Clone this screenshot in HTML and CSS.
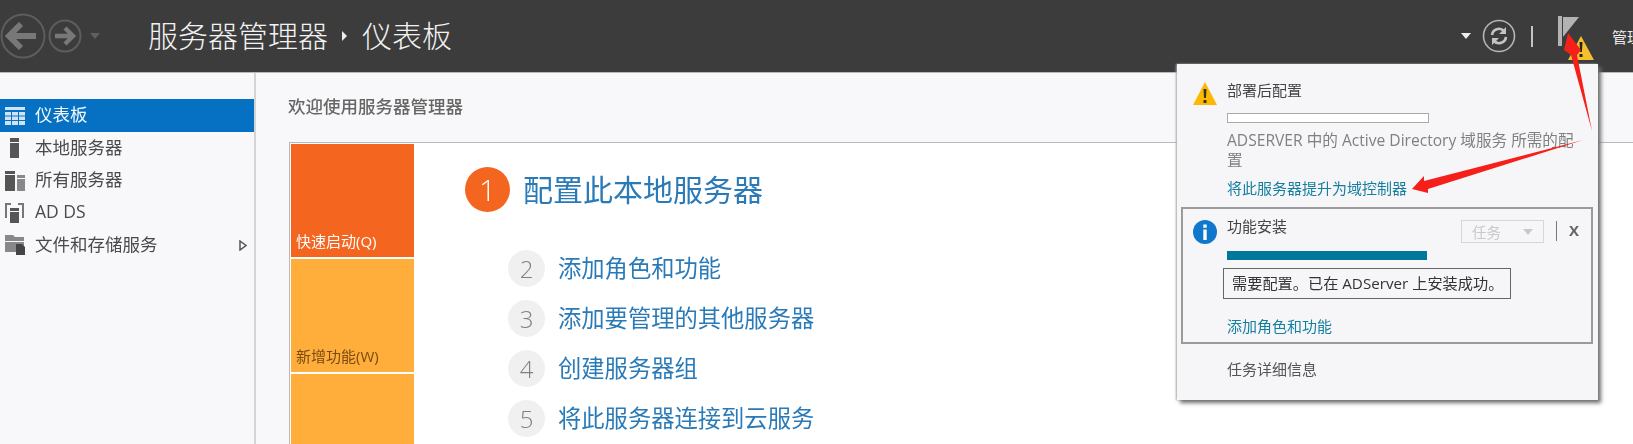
FILE: index.html
```html
<!DOCTYPE html>
<html lang="zh-CN">

<head>
  <meta charset="UTF-8">
  <title>服务器管理器</title>
  <link rel="stylesheet" href="styles.css">
</head>

<body>
  <div class="tete">
    <div class="nav">
      <svg class="nav-back" width="46" height="48" viewBox="0 0 46 48">
        <circle cx="23" cy="24" r="21.5" fill="none" stroke="#5d5d5d" stroke-width="2" />
        <path d="M9 24h27M21 12L9 24l12 12" fill="none" stroke="#787878" stroke-width="6" />
      </svg>
      <svg class="nav-next" width="34" height="34" viewBox="0 0 34 34">
        <circle cx="17" cy="17" r="15.5" fill="none" stroke="#5d5d5d" stroke-width="2" />
        <path d="M7 17h18M17 9l8 8-8 8" fill="none" stroke="#787878" stroke-width="4.5" />
      </svg>
      <span class="caret caret-nav"></span>
    </div>
    <div class="titre">服务器管理器</div>
    <span class="sep-arrow"></span>
    <div class="titre">仪表板</div>
    <div class="tools">
      <span class="caret caret-white"></span>
      <svg class="refresh" width="34" height="34" viewBox="0 0 34 34">
        <circle cx="17" cy="17" r="15.5" fill="none" stroke="#b5b5b5" stroke-width="1.6" />
        <path d="M10 16a7 7 0 0 1 12-4M24 18a7 7 0 0 1-12 4" fill="none" stroke="#c4c4c4" stroke-width="2.6" />
        <path d="M24 8v7h-7zM10 26v-7h7z" fill="#c4c4c4" />
      </svg>
      <span class="tool-line"></span>
      <svg class="flag" width="38" height="46" viewBox="0 0 38 46">
        <path d="M0 0h4v30H0z" fill="#b3b3b3" />
        <path d="M5 1h16L5 21z" fill="#b3b3b3" />
        <path d="M23 20l13 24H10z" fill="#f5c02c" />
        <path d="M21.500 26h3l-.6 10h-1.800zM21.500 38h3v3h-3z" fill="#222" />
      </svg>
      <span class="manage">管理</span>
    </div>
  </div>

  <div class="page">
    <div class="side">
      <div class="row row-on">
        <svg width="20" height="18" viewBox="0 0 20 18">
          <path d="M0 0h20v3H0zM0 5h6v3.500H0zM7 5h6v3.500H7zM14 5h6v3.500h-6zM0 9.500h6V13H0zM7 9.500h6V13H7zM14 9.500h6V13h-6zM0 14h6v4H0zM7 14h6v4H7zM14 14h6v4h-6z" fill="#cfe3f5" />
        </svg>
        <span>仪表板</span>
      </div>
      <div class="row">
        <svg width="20" height="20" viewBox="0 0 20 20">
          <path d="M5 0h9v4H5zM5 5h9v15H5z" fill="#555" />
        </svg>
        <span>本地服务器</span>
      </div>
      <div class="row">
        <svg width="20" height="20" viewBox="0 0 20 20">
          <path d="M0 0h10v3H0zM0 4h10v16H0z" fill="#555" />
          <path d="M12 4h8v3h-8zM12 8h8v12h-8z" fill="#888" />
        </svg>
        <span>所有服务器</span>
      </div>
      <div class="row">
        <svg width="20" height="20" viewBox="0 0 20 20">
          <path d="M0 0h6v2H2v13H0zM13 0h6v15h-2V2h-4z" fill="#777" />
          <path d="M5 5h9v3H5zM5 9h9v11H5z" fill="#555" />
        </svg>
        <span>AD DS</span>
      </div>
      <div class="row">
        <svg width="20" height="20" viewBox="0 0 20 20">
          <path d="M0 0h8l2 2h9v4H0zM0 7h19v10H0z" fill="#888" />
          <path d="M11 9h6l3 3v8h-9z" fill="#444" />
        </svg>
        <span>文件和存储服务</span>
        <svg class="tri" width="8" height="11" viewBox="0 0 8 11">
          <path d="M1 1l6 4.500-6 4.500z" fill="none" stroke="#555" stroke-width="1.500" />
        </svg>
      </div>
    </div>

    <div class="main">
      <div class="bienvenue">欢迎使用服务器管理器</div>
      <div class="card">
        <div class="tiles">
          <div class="tile tile-orange">快速启动(Q)</div>
          <div class="tile">新增功能(W)</div>
          <div class="tile tile-last"></div>
        </div>
        <div class="steps">
          <div class="step step-first">
            <span class="num">1</span>
            <span class="step-txt">配置此本地服务器</span>
          </div>
          <div class="step">
            <span class="num">2</span>
            <span class="step-txt">添加角色和功能</span>
          </div>
          <div class="step">
            <span class="num">3</span>
            <span class="step-txt">添加要管理的其他服务器</span>
          </div>
          <div class="step">
            <span class="num">4</span>
            <span class="step-txt">创建服务器组</span>
          </div>
          <div class="step">
            <span class="num">5</span>
            <span class="step-txt">将此服务器连接到云服务</span>
          </div>
        </div>
      </div>
    </div>
  </div>

  <!-- notifications -->
  <div class="flyout">
    <div class="notif">
      <svg class="notif-icon" width="24" height="24" viewBox="0 0 24 24">
        <path d="M12 0l12 23H0z" fill="#fdb900" />
        <path d="M10.500 7h3l-.5 9h-2zM10.500 18h3v3h-3z" fill="#333" />
      </svg>
      <div class="notif-body">
        <div class="notif-title">部署后配置</div>
        <div class="progress"></div>
        <div class="notif-text">ADSERVER 中的 Active Directory 域服务 所需的配置</div>
        <div class="lien">将此服务器提升为域控制器</div>
      </div>
    </div>
    <div class="notif notif-box">
      <svg class="notif-icon" width="24" height="24" viewBox="0 0 24 24">
        <circle cx="12" cy="12" r="12" fill="#0f77cc" />
        <path d="M10.300 4.500h3.400v3.200h-3.400zM10.300 9.500h3.400V20h-3.400z" fill="#fff" />
      </svg>
      <div class="notif-body">
        <div class="box-head">
          <div class="notif-title box-title">功能安装</div>
          <div class="task-btn"><span>任务</span><span class="caret caret-task"></span></div>
          <span class="box-line"></span>
          <span class="close">X</span>
        </div>
        <div class="bar"></div>
        <div class="msg">需要配置。已在 ADServer 上安装成功。</div>
        <div class="lien lien-add">添加角色和功能</div>
      </div>
    </div>
    <div class="details">任务详细信息</div>
  </div>

  <!-- fleches rouges -->
  <svg class="fleches" width="1633" height="444" viewBox="0 0 1633 444">
    <polygon points="1592,131 1577,55 1581,50 1568,33 1564,50 1571,55" fill="#f5201a" />
    <polygon points="1412,189 1424,176 1424,181 1583,140 1428,189 1428,193" fill="#f5201a" />
  </svg>
</body>

</html>
```

FILE: styles.css
```css
* {
  box-sizing: border-box;
}

body {
  margin: 0;
  width: 1633px;
  height: 444px;
  overflow: hidden;
  position: relative;
  background-color: #f8f8fa;
  font-family: "Open Sans", "Noto Sans CJK SC", sans-serif;
  color: #555;
  filter: blur(0.4px);
}

.tete {
  height: 73px;
  background-color: #3c3c3c;
  border-bottom: 1px solid #b9b9b9;
  display: flex;
  align-items: center;
}

.nav {
  width: 148px;
  display: flex;
  align-items: center;
  flex-shrink: 0;
}

.nav-next {
  margin-left: 2px;
}

.caret {
  width: 0;
  height: 0;
  flex-shrink: 0;
  border-left: 5px solid transparent;
  border-right: 5px solid transparent;
  border-top: 6px solid #5f5f5f;
}

.caret-nav {
  margin-left: 8px;
}

.titre {
  font-size: 30px;
  font-weight: 300;
  line-height: 40px;
  color: #f2f2f2;
}

.sep-arrow {
  width: 0;
  height: 0;
  margin: 0 15px 0 14px;
  border-top: 5px solid transparent;
  border-bottom: 5px solid transparent;
  border-left: 5px solid #eee;
}

.tools {
  margin-left: auto;
  width: 172px;
  height: 72px;
  display: flex;
  align-items: center;
  flex-shrink: 0;
  overflow: hidden;
}

.caret-white {
  border-top-color: #eee;
  margin-right: 11px;
}

.refresh {
  flex-shrink: 0;
}

.tool-line {
  width: 2px;
  height: 21px;
  flex-shrink: 0;
  background-color: #c4c4c4;
  margin-left: 15px;
  margin-right: 25px;
}

.flag {
  flex-shrink: 0;
  align-self: flex-start;
  margin-top: 16px;
}

.manage {
  font-size: 15px;
  color: #eee;
  margin-left: 16px;
  white-space: nowrap;
}

.page {
  display: flex;
  height: 371px;
}

.side {
  width: 256px;
  flex-shrink: 0;
  padding-top: 26px;
  border-right: 2px solid #d4d4d6;
}

.row {
  height: 32.4px;
  display: flex;
  align-items: center;
  gap: 10px;
  padding-left: 5px;
  font-size: 17.5px;
  color: #4a4a4a;
}

.row span {
  margin-bottom: 4px;
}

.row-on {
  width: 254px;
  height: 33px;
  background-color: #0671c2;
  color: #f4f8fc;
}

.tri {
  margin-left: auto;
  margin-right: 7px;
}

.main {
  flex: 1;
  padding-left: 33px;
}

.bienvenue {
  height: 69px;
  padding-top: 21px;
  margin-left: -1px;
  font-size: 17.5px;
  font-weight: 500;
  line-height: 24px;
  color: #666;
}

.card {
  height: 320px;
  background-color: #fff;
  border: 1px solid #b9b9b9;
  border-right: 0;
  padding: 1px 0 0 1px;
  display: flex;
}

.tiles {
  width: 123px;
  flex-shrink: 0;
  display: flex;
  flex-direction: column;
  gap: 2px;
}

.tile {
  height: 113px;
  flex-shrink: 0;
  background-color: #ffae3c;
  color: #7a4a10;
  font-size: 15px;
  padding: 0 0 6px 5px;
  display: flex;
  align-items: flex-end;
}

.tile-orange {
  background-color: #f46520;
  color: #fff;
}

.steps {
  padding: 23px 0 0 51px;
}

.step {
  height: 37px;
  margin: 13px 0 0 43px;
  display: flex;
  align-items: center;
  gap: 13px;
  font-size: 23.3px;
  color: #2a7ab8;
  white-space: nowrap;
}

.step-first {
  height: 45px;
  margin: 0 0 38px;
  font-size: 30px;
}

.step-txt {
  margin-bottom: 3px;
}

.num {
  width: 37px;
  height: 37px;
  border-radius: 50%;
  background-color: #f0f0f0;
  color: #808080;
  font-weight: 300;
  font-size: 24px;
  display: flex;
  align-items: center;
  justify-content: center;
}

.step-first .num {
  width: 45px;
  height: 45px;
  background-color: #f46520;
  color: #fff;
  font-size: 30px;
}

.flyout {
  position: absolute;
  left: 1177px;
  top: 64px;
  width: 421px;
  height: 336px;
  background-color: #f6f6f8;
  box-shadow: 3px 3px 4px #6e6e6e, -1px 0 2px #aaa;
}

.notif {
  display: flex;
  padding: 16px 0 0 16px;
}

.notif-icon {
  flex-shrink: 0;
  margin-top: 2px;
}

.notif-body {
  margin-left: 10px;
  flex: 1;
}

.notif-title {
  font-size: 15px;
  line-height: 20px;
  color: #444;
}

.box-title {
  margin-top: -2px;
}

.progress {
  width: 202px;
  height: 10px;
  margin-top: 13px;
  background-color: #fff;
  border: 1px solid #aaa;
}

.notif-text {
  width: 352px;
  margin-top: 8px;
  font-size: 15.6px;
  line-height: 19.5px;
  color: #808080;
}

.lien {
  margin-top: 8px;
  font-size: 15px;
  line-height: 20px;
  color: #157f9e;
}

.notif-box {
  width: 412px;
  height: 137px;
  margin: 9px 0 0 4px;
  padding: 9px 0 0 10px;
  border: 2px solid #9b9b9b;
}

.box-head {
  height: 24px;
  display: flex;
  align-items: flex-start;
}

.task-btn {
  width: 83px;
  height: 23px;
  margin: 2px 0 0 auto;
  padding: 0 10px;
  border: 1px solid #d6d6d8;
  display: flex;
  align-items: center;
  justify-content: space-between;
  font-size: 14.5px;
  color: #c9c9c9;
}

.caret-task {
  border-top-color: #c9c9c9;
}

.box-line {
  width: 1px;
  height: 20px;
  margin: 3px 0 0 12px;
  background-color: #777;
}

.close {
  width: 34px;
  padding-top: 2px;
  text-align: center;
  font-size: 15px;
  font-weight: 700;
  color: #666;
}

.bar {
  width: 200px;
  height: 9px;
  margin-top: 9px;
  background-color: #00789c;
}

.msg {
  width: 288px;
  height: 31px;
  margin: 8px 0 0 -4px;
  padding-left: 8px;
  border: 1px solid #666;
  font-size: 15.2px;
  line-height: 29px;
  color: #333;
  white-space: nowrap;
}

.lien-add {
  margin-top: 17px;
}

.details {
  margin: 15px 0 0 50px;
  font-size: 15px;
  line-height: 20px;
  color: #555;
}

.fleches {
  position: absolute;
  left: 0;
  top: 0;
  pointer-events: none;
}
```
